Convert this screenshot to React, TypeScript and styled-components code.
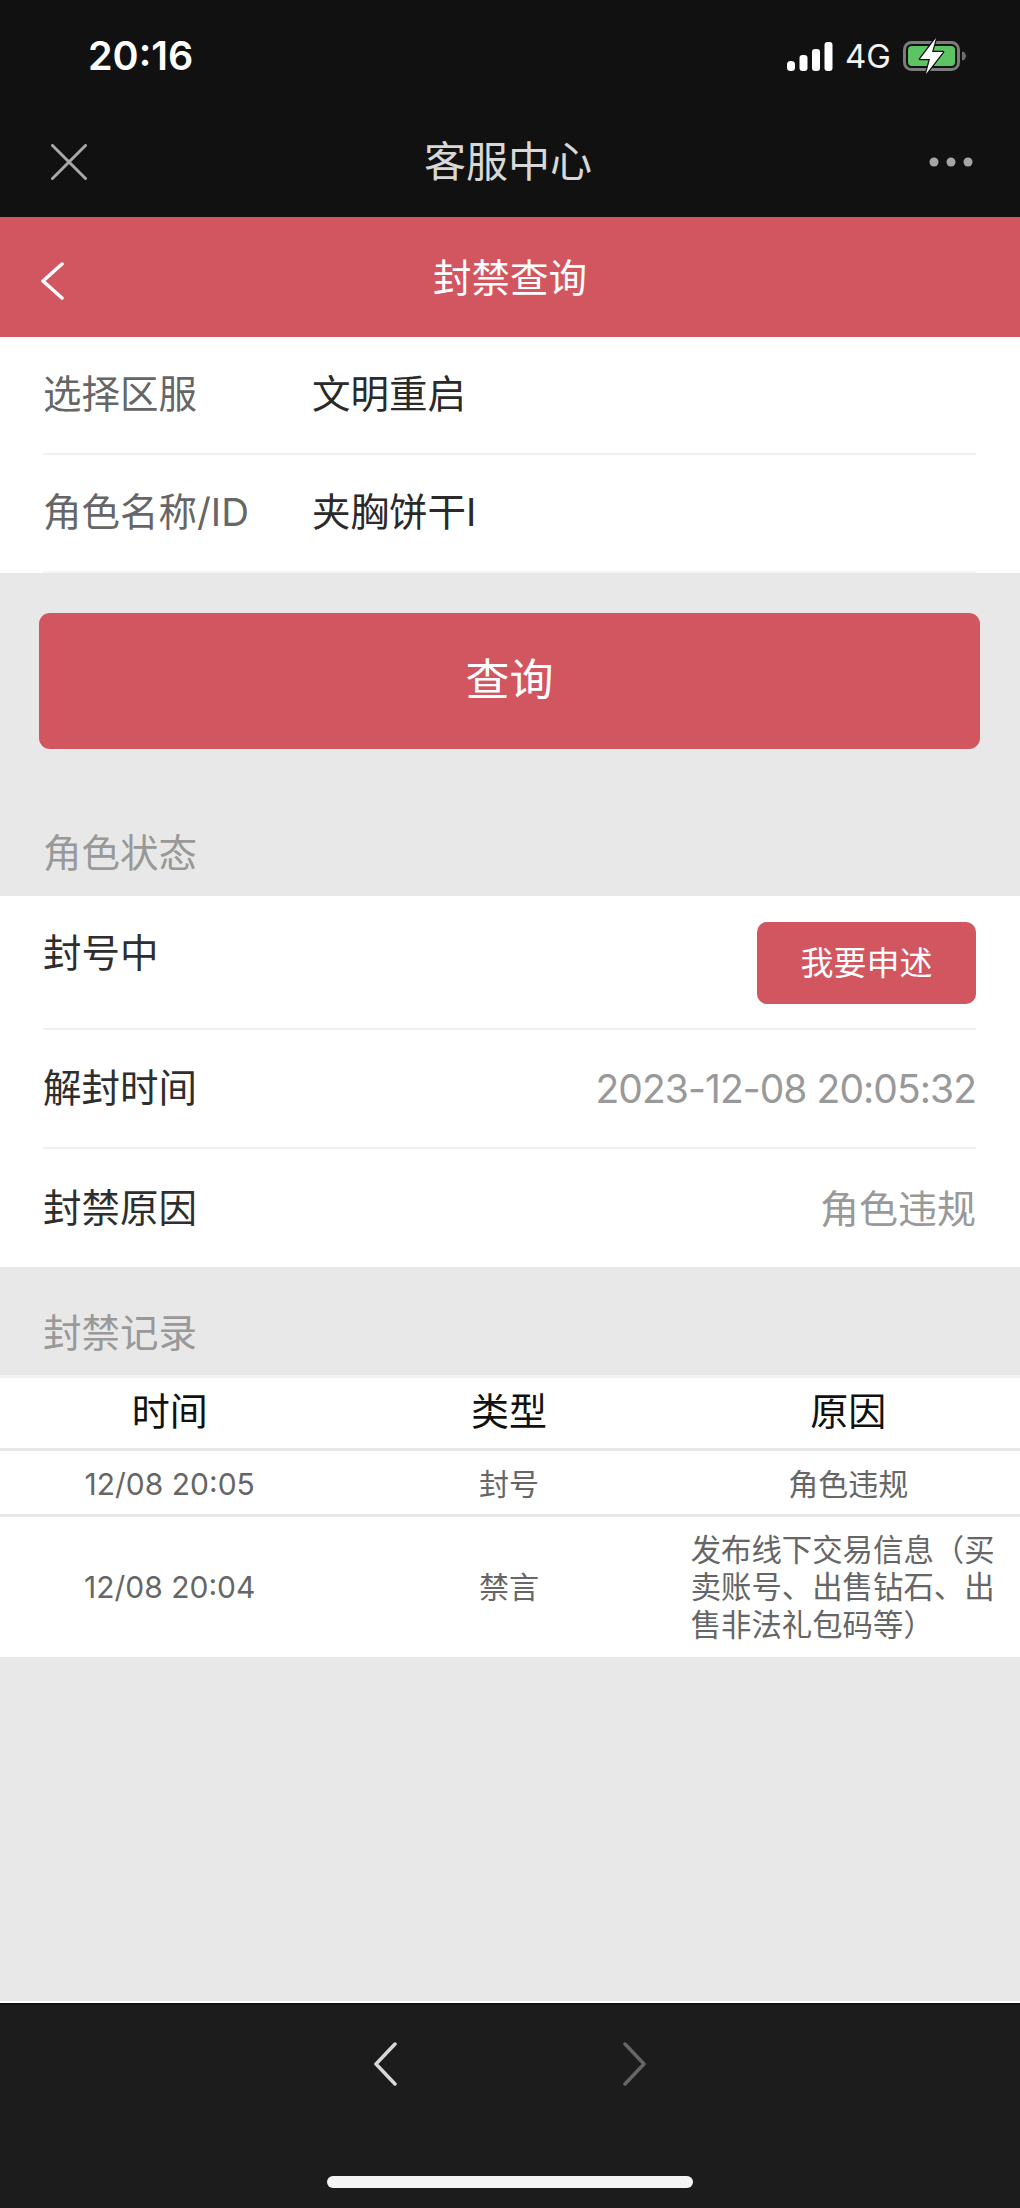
import React from "react";
import styled, { createGlobalStyle } from "styled-components";

const Global = createGlobalStyle`
  html, body { margin: 0; padding: 0; background: #e8e8e8; }
  * { box-sizing: border-box; }
  body { font-family: "Inter", "Noto Sans CJK SC", "Liberation Sans", sans-serif; }
`;

const Page = styled.div`
  width: 1020px;
  height: 2208px;
  display: flex;
  flex-direction: column;
  overflow: hidden;
  background: #e8e8e8;
`;

const TopChrome = styled.header`
  background: #111112;
  height: 217px;
  display: flex;
  flex-direction: column;
  flex: none;
`;

const StatusBar = styled.div`
  height: 112px;
  display: flex;
  align-items: center;
  justify-content: space-between;
  padding: 0 53px 0 88px;
`;

const Clock = styled.span`
  font-family: "Inter", sans-serif;
  font-size: 39.500px;
  font-weight: 600;
  color: #fff;
`;

const StatusIcons = styled.div`
  display: flex;
  align-items: center;
  gap: 12px;
`;

const NetworkLabel = styled.span`
  font-family: "Inter", sans-serif;
  font-size: 33px;
  color: #f2f2f2;
  line-height: 1;
`;

const WebNav = styled.div`
  height: 105px;
  padding: 0 47px 6px 51px;
  display: flex;
  align-items: center;
  justify-content: space-between;
`;

const WebTitle = styled.h1`
  margin: 0;
  font-size: 42px;
  font-weight: 400;
  color: #d8d8d8;
  line-height: 1;
`;

const RedHeader = styled.div`
  height: 120px;
  flex: none;
  background: #d25660;
  display: grid;
  grid-template-columns: 1fr auto 1fr;
  align-items: center;
`;

const HeaderBack = styled.div`
  padding: 8px 0 0 41px;
  display: flex;
`;

const HeaderTitle = styled.h2`
  margin: 3px 0 0;
  font-size: 38.500px;
  font-weight: 400;
  color: #fff;
  line-height: 1;
`;

const Main = styled.main`
  flex: 1;
  display: flex;
  flex-direction: column;
`;

const WhiteBlock = styled.section`
  background: #fff;
  display: flex;
  flex-direction: column;
`;

const FormRow = styled.div<{ $h: number; $last?: boolean }>`
  height: ${(p) => p.$h}px;
  margin: 0 44px 0 43px;
  padding-bottom: 2px;
  display: flex;
  align-items: center;
  border-bottom: 2px solid ${(p) => (p.$last ? "#f4f4f4" : "#f0f0f0")};
  font-size: 38.500px;
  line-height: 1;
`;

const FormLabel = styled.span`
  width: 269px;
  color: #666;
  flex: none;
`;

const FormValue = styled.span`
  color: #2a2a2a;
`;

const QueryButton = styled.button`
  display: block;
  margin: 40px 40px 0 39px;
  height: 136px;
  padding: 0 0 8px;
  border: none;
  border-radius: 11px;
  background: #d25660;
  color: #fff;
  font: inherit;
  font-size: 44px;
`;

const SectionTitle = styled.div<{ $top: number; $h: number }>`
  height: ${(p) => p.$h}px;
  padding: ${(p) => p.$top}px 0 0 43px;
  color: #999;
  font-size: 38.500px;
  line-height: 1;
`;

const StatusRow = styled.div<{ $h: number; $last?: boolean }>`
  height: ${(p) => p.$h}px;
  margin: 0 44px 0 43px;
  display: flex;
  align-items: center;
  justify-content: space-between;
  border-bottom: ${(p) => (p.$last ? "none" : "2px solid #f0f0f0")};
  font-size: 38.500px;
  line-height: 1;
`;

const BanRow = styled(StatusRow)`
  align-items: flex-start;
  padding-top: 26px;
`;

const StatusLabel = styled.span`
  color: #2e2e2e;
  padding-top: 12px;
`;

const PlainLabel = styled.span`
  color: #2e2e2e;
`;

const StatusValue = styled.span<{ $tight?: boolean }>`
  color: #999;
  font-size: 39px;
  letter-spacing: ${(p) => (p.$tight ? "-0.95px" : "0")};
`;

const AppealButton = styled.button`
  width: 219px;
  height: 82px;
  border: none;
  border-radius: 10px;
  background: #d25660;
  color: #fff;
  font: inherit;
  font-size: 33px;
`;

const RecordTable = styled.section`
  background: #fff;
  border-top: 3px solid #f2f2f2;
`;

const RecordRow = styled.div<{ $h: number; $line?: boolean; $nudge?: number }>`
  height: ${(p) => p.$h}px;
  display: grid;
  grid-template-columns: repeat(3, 1fr);
  align-items: center;
  text-align: center;
  padding: ${(p) => p.$nudge ?? 0}px 2px 0 0;
  border-bottom: ${(p) => (p.$line ? "3px solid #e8e8e8" : "none")};
`;

const HeadCell = styled.div`
  font-size: 38px;
  line-height: 1;
  color: #111;
  padding-bottom: 4px;
`;

const Cell = styled.div<{ $left?: boolean }>`
  font-size: ${(p) => (p.$left ? "30.400px" : "30px")};
  line-height: 37.500px;
  color: #666;
  text-align: ${(p) => (p.$left ? "left" : "center")};
  padding: ${(p) => (p.$left ? "0 6px 0 12px" : "0")};
`;

const BottomBar = styled.footer`
  height: 205px;
  flex: none;
  background: #1c1c1c;
  border-top: 2px solid #111;
  display: flex;
  flex-direction: column;
  align-items: center;
  box-shadow: 0 -2px 0 #fff;
`;

const BottomNav = styled.div`
  height: 171px;
  padding-top: 37px;
  width: 272px;
  display: flex;
  justify-content: space-between;
  align-items: flex-start;
`;

const HomeBar = styled.div`
  width: 366px;
  height: 12px;
  border-radius: 6px;
  background: #f4f4f4;
`;

const SignalIcon = () => (
  <svg width="46" height="29" viewBox="0 0 46 29">
    <rect x="0" y="19" width="8" height="10" rx="3.500" fill="#fff" />
    <rect x="12.500" y="13" width="8" height="16" rx="3" fill="#fff" />
    <rect x="25" y="7" width="8" height="22" rx="3" fill="#fff" />
    <rect x="37.500" y="0" width="8" height="29" rx="3" fill="#fff" />
  </svg>
);

const BatteryIcon = () => (
  <svg width="64" height="38" viewBox="0 0 64 38">
    <rect x="1.500" y="5.500" width="54" height="27" rx="7" fill="none" stroke="#7c7c7c" strokeWidth="3" />
    <rect x="5" y="9" width="47" height="20" rx="4" fill="#5cc463" />
    <path d="M59 14.500c2.500.5 4 2.200 4 4.500s-1.500 4-4 4.500z" fill="#6e6e6e" />
    <path d="M33 1 17 22h10l-4 15 17-22H29z" fill="#fff" stroke="#111" strokeWidth="2.500" strokeLinejoin="round" paintOrder="stroke" />
  </svg>
);

const CloseIcon = () => (
  <svg width="36" height="36" viewBox="0 0 36 36" fill="none" stroke="#a8a8a8" strokeWidth="3" strokeLinecap="round">
    <path d="M1.500 1.500 34.500 34.500M34.500 1.500 1.500 34.500" />
  </svg>
);

const DotsIcon = () => (
  <svg width="44" height="10" viewBox="0 0 44 10" fill="#a6a6a6">
    <circle cx="5" cy="5" r="4.500" />
    <circle cx="22" cy="5" r="4.500" />
    <circle cx="39" cy="5" r="4.500" />
  </svg>
);

const Chevron = ({ dir, color, w, h, sw }: { dir: "l" | "r"; color: string; w: number; h: number; sw: number }) => (
  <svg width={w} height={h} viewBox={`0 0 ${w} ${h}`} fill="none" stroke={color} strokeWidth={sw} strokeLinecap="round" strokeLinejoin="round">
    {dir === "l" ? (
      <path d={`M${w - 2} 2 2 ${h / 2} ${w - 2} ${h - 2}`} />
    ) : (
      <path d={`M2 2 ${w - 2} ${h / 2} 2 ${h - 2}`} />
    )}
  </svg>
);

export default function App() {
  return (
    <Page>
      <Global />
      <TopChrome>
        <StatusBar>
          <Clock>20:16</Clock>
          <StatusIcons>
            <SignalIcon />
            <NetworkLabel>4G</NetworkLabel>
            <BatteryIcon />
          </StatusIcons>
        </StatusBar>
        <WebNav>
          <CloseIcon />
          <WebTitle>客服中心</WebTitle>
          <DotsIcon />
        </WebNav>
      </TopChrome>
      <RedHeader>
        <HeaderBack>
          <Chevron dir="l" color="#fff" w={23} h={38} sw={3.500} />
        </HeaderBack>
        <HeaderTitle>封禁查询</HeaderTitle>
        <span />
      </RedHeader>
      <Main>
        <WhiteBlock>
          <FormRow $h={118}>
            <FormLabel>选择区服</FormLabel>
            <FormValue>文明重启</FormValue>
          </FormRow>
          <FormRow $h={118} $last>
            <FormLabel>角色名称/ID</FormLabel>
            <FormValue>夹胸饼干I</FormValue>
          </FormRow>
        </WhiteBlock>
        <QueryButton>查询</QueryButton>
        <SectionTitle $top={85} $h={147}>角色状态</SectionTitle>
        <WhiteBlock>
          <BanRow $h={134}>
            <StatusLabel>封号中</StatusLabel>
            <AppealButton>我要申述</AppealButton>
          </BanRow>
          <StatusRow $h={119}>
            <PlainLabel>解封时间</PlainLabel>
            <StatusValue $tight>2023-12-08 20:05:32</StatusValue>
          </StatusRow>
          <StatusRow $h={118} $last>
            <PlainLabel>封禁原因</PlainLabel>
            <StatusValue>角色违规</StatusValue>
          </StatusRow>
        </WhiteBlock>
        <SectionTitle $top={47} $h={108}>封禁记录</SectionTitle>
        <RecordTable>
          <RecordRow $h={73} $line>
            <HeadCell>时间</HeadCell>
            <HeadCell>类型</HeadCell>
            <HeadCell>原因</HeadCell>
          </RecordRow>
          <RecordRow $h={66} $line $nudge={5}>
            <Cell>12/08 20:05</Cell>
            <Cell>封号</Cell>
            <Cell>角色违规</Cell>
          </RecordRow>
          <RecordRow $h={140} $nudge={2}>
            <Cell>12/08 20:04</Cell>
            <Cell>禁言</Cell>
            <Cell $left>发布线下交易信息（买卖账号、出售钻石、出售非法礼包码等）</Cell>
          </RecordRow>
        </RecordTable>
      </Main>
      <BottomBar>
        <BottomNav>
          <Chevron dir="l" color="#d8d8d8" w={23} h={44} sw={3.500} />
          <Chevron dir="r" color="#666" w={23} h={44} sw={3.500} />
        </BottomNav>
        <HomeBar />
      </BottomBar>
    </Page>
  );
}
